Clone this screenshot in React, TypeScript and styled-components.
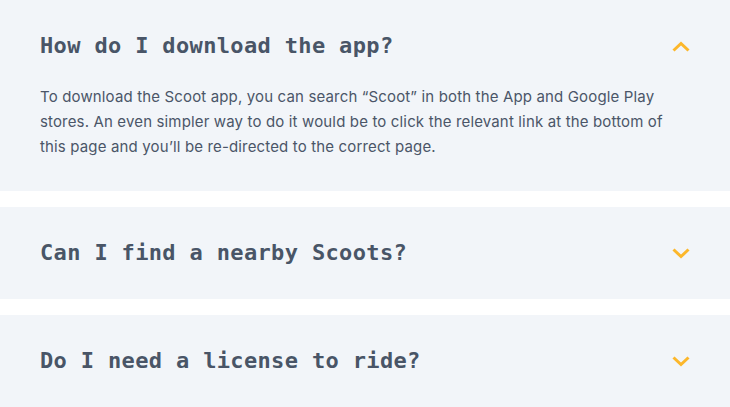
import React from "react";
import styled, { createGlobalStyle } from "styled-components";

const GlobalStyle = createGlobalStyle`
  html, body {
    margin: 0;
    padding: 0;
    background: #ffffff;
  }
  * { box-sizing: border-box; }
`;

const List = styled.div`
  display: flex;
  flex-direction: column;
  gap: 16px;
  width: 730px;
`;

const Item = styled.section`
  background: #f2f5f9;
  padding: 32px 40px;
`;

const Header = styled.div`
  display: flex;
  align-items: center;
  justify-content: space-between;
`;

const Question = styled.h2`
  margin: 0;
  font-family: "DejaVu Sans Mono", "Liberation Mono", monospace;
  font-weight: 700;
  font-size: 22px;
  letter-spacing: 0.35px;
  line-height: 28px;
  color: #495567;
`;

const Answer = styled.p`
  margin: 24px 0 0;
  max-width: 630px;
  font-family: "Inter", "Noto Sans", sans-serif;
  font-size: 15px;
  letter-spacing: 0.15px;
  line-height: 25px;
  color: #4b5668;
`;

const Chevron = styled.svg<{ $open: boolean }>`
  width: 18px;
  height: 11px;
  flex: none;
  transform: rotate(${(p) => (p.$open ? "180deg" : "0deg")});
`;

const ChevronIcon = ({ open }: { open: boolean }) => (
  <Chevron $open={open} viewBox="0 0 18 11" fill="none">
    <polyline
      points="1.5,1.5 9,8.5 16.5,1.5"
      stroke="#fcb72b"
      strokeWidth="3"
    />
  </Chevron>
);

const faqs = [
  {
    q: "How do I download the app?",
    a: "To download the Scoot app, you can search \u201CScoot\u201D in both the App and Google Play stores. An even simpler way to do it would be to click the relevant link at the bottom of this page and you\u2019ll be re-directed to the correct page.",
    open: true,
  },
  { q: "Can I find a nearby Scoots?", a: "", open: false },
  { q: "Do I need a license to ride?", a: "", open: false },
];

export default function App() {
  return (
    <>
      <GlobalStyle />
      <List>
        {faqs.map((f) => (
          <Item key={f.q}>
            <Header>
              <Question>{f.q}</Question>
              <ChevronIcon open={f.open} />
            </Header>
            {f.open && <Answer>{f.a}</Answer>}
          </Item>
        ))}
      </List>
    </>
  );
}
